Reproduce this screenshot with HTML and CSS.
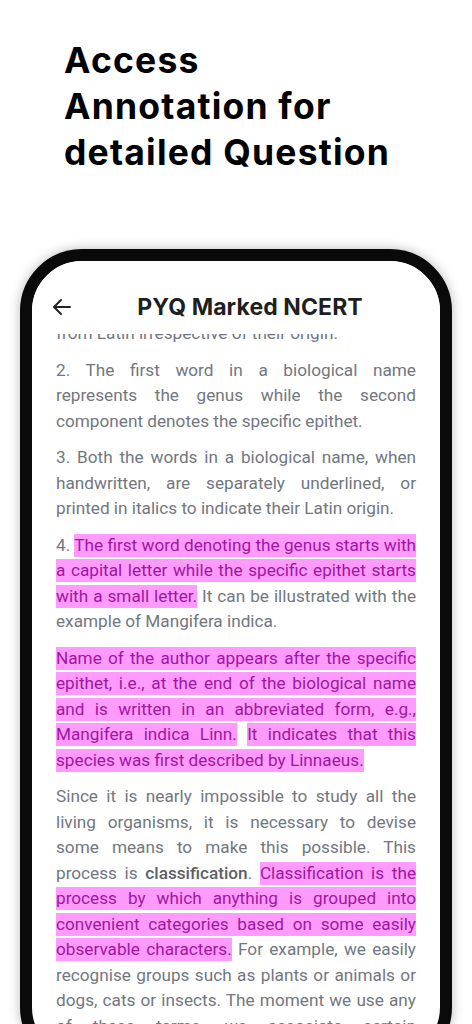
FILE: index.html
```html
<!DOCTYPE html>
<html lang="en">
<head>
<meta charset="utf-8">
<title>PYQ Marked NCERT</title>
<link rel="stylesheet" href="styles.css">
</head>
<body>
<div class="page">
  <h1 class="headline">Access<br>Annotation for<br>detailed Question</h1>
  <div class="phone">
    <div class="screen">
      <header class="appbar">
        <span class="back">
          <svg width="20" height="18" viewBox="0 0 20 18" fill="none" stroke="#222" stroke-width="1.9" stroke-linecap="round" stroke-linejoin="round">
            <path d="M18 9H2.5"/>
            <path d="M9 2L2 9l7 7"/>
          </svg>
        </span>
        <span class="title">PYQ Marked NCERT</span>
      </header>
      <div class="content">
        <div class="scroll">
          <p class="para cut">from Latin irrespective of their origin.</p>
          <p class="para">2. The first word in a biological name represents the genus while the second component denotes the specific epithet.</p>
          <p class="para">3. Both the words in a biological name, when handwritten, are separately underlined, or printed in italics to indicate their Latin origin.</p>
          <p class="para">4. <mark class="hl">The first word denoting the genus starts with a capital letter while the specific epithet starts with a small letter.</mark> It can be illustrated with the example of Mangifera indica.</p>
          <p class="para"><mark class="hl">Name of the author appears after the specific epithet, i.e., at the end of the biological name and is written in an abbreviated form, e.g., Mangifera indica Linn.</mark> <mark class="hl">It indicates that this species was first described by Linnaeus.</mark></p>
          <p class="para">Since it is nearly impossible to study all the living organisms, it is necessary to devise some means to make this possible. This process is <b class="strong">classification</b>. <mark class="hl">Classification is the process by which anything is grouped into convenient categories based on some easily observable characters.</mark> For example, we easily recognise groups such as plants or animals or dogs, cats or insects. The moment we use any of these terms, we associate certain characters with the organism in that group.</p>
        </div>
      </div>
    </div>
  </div>
</div>
</body>
</html>
```

FILE: styles.css
```css
html, body {
  margin: 0;
  padding: 0;
  background: #ffffff;
}
body {
  width: 472px;
  height: 1024px;
  overflow: hidden;
}
.page {
  padding-top: 38px;
}
.headline {
  margin: 0 0 0 64px;
  font-family: Inter, "Open Sans", sans-serif;
  font-weight: 700;
  font-size: 35.5px;
  line-height: 46px;
  letter-spacing: 1.2px;
  color: #000;
}
.phone {
  margin: 73px 0 0 20px;
  width: 432px;
  height: 820px;
  box-sizing: border-box;
  border: 12px solid #0a0a0a;
  border-radius: 62px;
  background: #fff;
  box-shadow: 0 0 12px rgba(0, 0, 0, 0.28);
  overflow: hidden;
}
.screen {
  height: 100%;
  display: flex;
  flex-direction: column;
}
.appbar {
  display: flex;
  align-items: center;
  height: 46px;
  padding: 23px 24px 4px 20px;
  flex: none;
  background: #fff;
}
.back {
  width: 20px;
  height: 18px;
  display: flex;
}
.title {
  flex: 1;
  text-align: center;
  padding-left: 12px;
  font-family: Inter, "Open Sans", sans-serif;
  font-weight: 700;
  font-size: 23px;
  letter-spacing: 0.1px;
  color: #1f1f1f;
}
.content {
  flex: 1;
  overflow: hidden;
  padding: 0 24px;
}
.scroll {
  margin-top: -13px;
}
.para {
  margin: 0 0 11px 0;
  font-family: Roboto, "Liberation Sans", sans-serif;
  font-size: 17.2px;
  line-height: 25.5px;
  color: #72777f;
  text-align: justify;
}
.hl {
  background: #ff9bff;
  color: #a016a0;
  padding: 1px 0 2px;
}
.strong {
  font-weight: 500;
  color: #5a5f68;
}
```
